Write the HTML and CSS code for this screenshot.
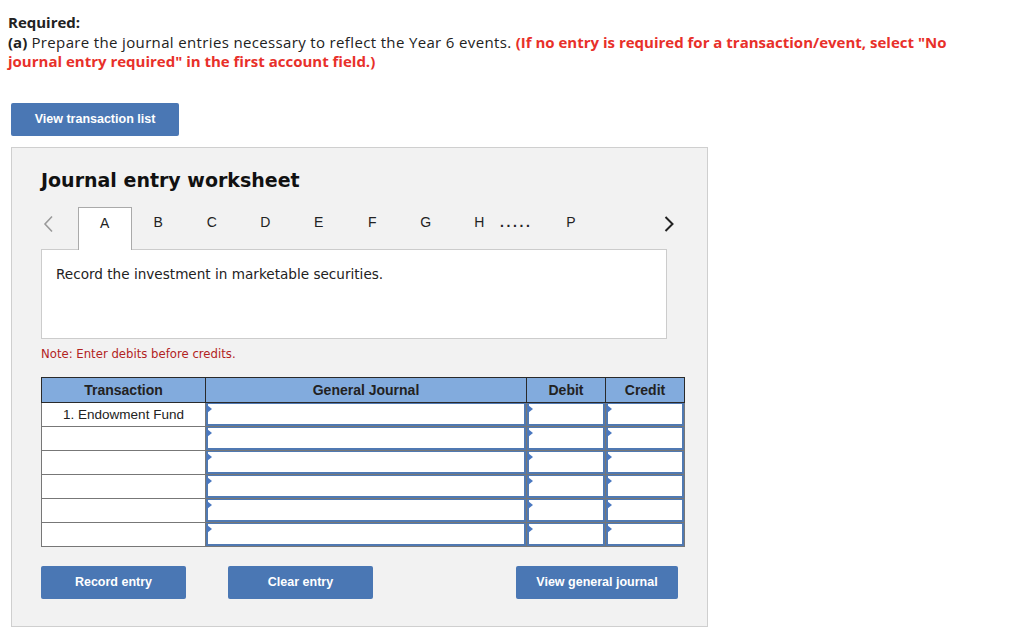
FILE: index.html
```html
<!DOCTYPE html>
<html>
<head>
<meta charset="utf-8">
<link rel="stylesheet" href="styles.css">
</head>
<body>
<div class="intro">
  <div class="req">Required:</div>
  <div class="task"><b>(a)</b> Prepare the journal entries necessary to reflect the Year 6 events. <span class="warn">(If no entry is required for a transaction/event, select "No journal entry required" in the first account field.)</span></div>
</div>
<button class="btn btn-list">View transaction list</button>
<div class="panel">
  <h1 class="title">Journal entry worksheet</h1>
  <div class="tabs">
    <span class="nav prev"><svg width="12" height="18" viewBox="0 0 12 18"><path d="M10 1.5 L3 9 L10 16.5" fill="none" stroke="#9a9a9a" stroke-width="1.6"/></svg></span>
    <span class="tab active">A</span>
    <span class="tab">B</span>
    <span class="tab">C</span>
    <span class="tab">D</span>
    <span class="tab">E</span>
    <span class="tab">F</span>
    <span class="tab">G</span>
    <span class="tab">H</span>
    <span class="dots">.....</span>
    <span class="tab tab-p">P</span>
    <span class="nav next"><svg width="12" height="18" viewBox="0 0 12 18"><path d="M2.5 2 L9.5 9 L2.5 16" fill="none" stroke="#222" stroke-width="2"/></svg></span>
  </div>
  <div class="desc">Record the investment in marketable securities.</div>
  <p class="note">Note: Enter debits before credits.</p>
  <table class="jt">
    <colgroup><col class="c1"><col class="c2"><col class="c3"><col class="c4"></colgroup>
    <thead>
      <tr><th>Transaction</th><th>General Journal</th><th>Debit</th><th>Credit</th></tr>
    </thead>
    <tbody>
      <tr><td class="tx">1. Endowment Fund</td><td class="in"><div class="box"></div></td><td class="in"><div class="box"></div></td><td class="in"><div class="box"></div></td></tr>
      <tr><td class="tx"></td><td class="in"><div class="box"></div></td><td class="in"><div class="box"></div></td><td class="in"><div class="box"></div></td></tr>
      <tr><td class="tx"></td><td class="in"><div class="box"></div></td><td class="in"><div class="box"></div></td><td class="in"><div class="box"></div></td></tr>
      <tr><td class="tx"></td><td class="in"><div class="box"></div></td><td class="in"><div class="box"></div></td><td class="in"><div class="box"></div></td></tr>
      <tr><td class="tx"></td><td class="in"><div class="box"></div></td><td class="in"><div class="box"></div></td><td class="in"><div class="box"></div></td></tr>
      <tr><td class="tx"></td><td class="in"><div class="box"></div></td><td class="in"><div class="box"></div></td><td class="in"><div class="box"></div></td></tr>
    </tbody>
  </table>
  <div class="actions">
    <button class="btn btn-act">Record entry</button>
    <button class="btn btn-act btn-clear">Clear entry</button>
    <button class="btn btn-act btn-view">View general journal</button>
  </div>
</div>
</body>
</html>
```
FILE: styles.css
```css
html, body { margin: 0; padding: 0; background: #fff; }
body { font-family: "Open Sans", "Lato", sans-serif; color: #222; }

.intro { padding: 13px 0 0 8px; font-size: 15px; letter-spacing: 0.35px; line-height: 19.5px; width: 962px; }
.req { font-weight: bold; letter-spacing: 0; }
.task b { font-weight: bold; letter-spacing: 0; }
.warn { color: #e8302a; font-weight: bold; letter-spacing: 0; }

.btn {
  display: block;
  background: #4a77b4;
  color: #fff;
  border: 0;
  border-radius: 2px;
  font-family: "Liberation Sans", Arial, sans-serif;
  font-weight: bold;
  font-size: 12.5px;
  cursor: pointer;
  padding: 0;
}
.btn-list { margin: 31px 0 0 11px; width: 168px; height: 33px; }

.panel {
  margin: 11px 0 0 11px;
  width: 637px;
  height: 478px;
  padding: 0 29px;
  background: #f2f2f2;
  border: 1px solid #cfcfcf;
}
.title {
  margin: 0;
  padding-top: 20px;
  font-family: "DejaVu Sans", Verdana, sans-serif;
  font-weight: bold;
  font-size: 19px;
  line-height: 24px;
  color: #111;
}

.tabs {
  margin-top: 15px;
  display: flex;
  align-items: stretch;
  height: 42px;
  width: 626px;
  font-family: "Liberation Sans", Arial, sans-serif;
  font-size: 14px;
  color: #222;
}
.nav { display: flex; align-items: center; padding-bottom: 8px; }
.prev { width: 37px; padding-left: 1px; }
.next { margin-left: auto; margin-right: -8px; width: 12px; }
.tab {
  width: 53.5px;
  display: flex;
  align-items: center;
  justify-content: center;
  padding-bottom: 12px;
}
.tab.active {
  background: #fff;
  border: 1px solid #aaa;
  border-bottom: 0;
  position: relative;
  z-index: 1;
  margin-bottom: -1px;
  padding-bottom: 11px;
}
.dots { display: flex; align-items: center; width: 37px; margin-left: -6px; letter-spacing: 2.6px; font-weight: bold; padding-bottom: 12px; }
.tab-p { width: 68px; }
.tabs > * { box-sizing: border-box; flex-shrink: 0; }

.desc {
  background: #fff;
  border: 1px solid #ccc;
  width: 610px;
  height: 73px;
  padding: 15px 0 0 14px;
  font-family: "DejaVu Sans", Verdana, sans-serif;
  font-size: 13.6px;
  line-height: 18px;
}

.note {
  margin: 7px 0 0 0;
  font-family: "DejaVu Sans", Verdana, sans-serif;
  font-size: 11.7px;
  line-height: 16px;
  color: #b2231f;
}

.jt {
  margin-top: 15px;
  border-collapse: collapse;
  width: 643px;
  table-layout: fixed;
  font-family: "Liberation Sans", Arial, sans-serif;
  font-size: 13.5px;
  border: 1px solid #777;
}
.c1 { width: 164px; }
.c2 { width: 321px; }
.c3 { width: 79px; }
.c4 { width: 79px; }
.jt th {
  background: #82abdd;
  border: 1px solid #2a2a2a;
  height: 24px;
  padding: 0;
  font-size: 14px;
  font-weight: bold;
  color: #222;
}
.jt td { padding: 0; height: 23px; border: 1px solid #777; background: #fff; }
.jt td.tx { text-align: center; color: #222; }
.box {
  height: 23px;
  box-sizing: border-box;
  border: 2px solid #5079b2;
  border-top-width: 1px;
  background: #fff;
  position: relative;
}
.box::before {
  content: "";
  position: absolute;
  left: -1px;
  top: 1px;
  width: 0;
  height: 0;
  border-top: 4px solid transparent;
  border-bottom: 4px solid transparent;
  border-left: 5px solid #4a78c0;
}

.actions { display: flex; margin-top: 19px; }
.btn-act { width: 145px; height: 33px; }
.btn-clear { margin-left: 42px; }
.btn-view { margin-left: auto; width: 162px; }
```
